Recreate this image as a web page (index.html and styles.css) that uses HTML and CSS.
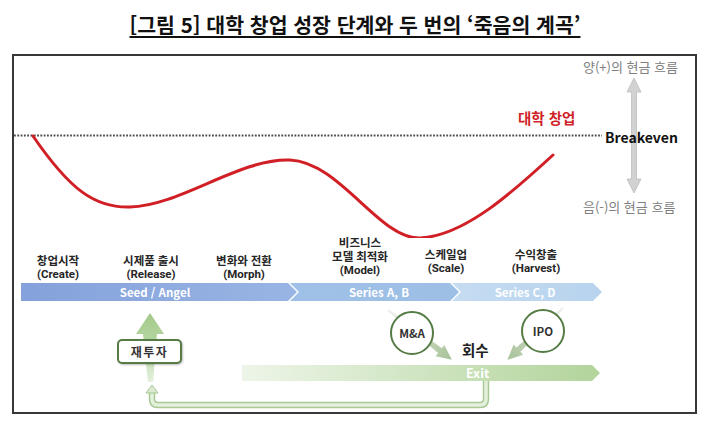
FILE: index.html
```html
<!DOCTYPE html>
<html lang="ko">
<head>
<meta charset="utf-8">
<title>대학 창업 성장 단계</title>
<link rel="stylesheet" href="styles.css">
</head>
<body>
<h1 class="title">[그림 5] 대학 창업 성장 단계와 두 번의 ‘죽음의 계곡’</h1>
<div class="frame">
  <div class="chart">
    <svg class="chart-svg" width="681" height="182" viewBox="0 0 681 182">
      <line x1="0" y1="79.5" x2="588" y2="79.5" stroke="#4a4a4a" stroke-width="2" stroke-dasharray="1.8 1.5"/>
      <polygon points="620,22 627,36 622.5,36 622.5,123 627,123 620,137 613,123 617.5,123 617.5,36 613,36" fill="#d2d2d2" stroke="#bcbcbc" stroke-width="0.8"/>
      <path d="M19,80 C56,134 81,152 116,151 C166,150 226,102 276,104 C326,106 366,184 406,182 C451,180 501,134 539,99" fill="none" stroke="#d11f26" stroke-width="3" stroke-linecap="round"/>
    </svg>
    <span class="cash cash-pos">양(+)의 현금 흐름</span>
    <span class="cash cash-neg">음(-)의 현금 흐름</span>
    <span class="uni">대학 창업</span>
    <span class="breakeven">Breakeven</span>
  </div>
  <div class="stages">
    <div class="stage s1"><span>창업시작</span><span>(Create)</span></div>
    <div class="stage s2"><span>시제품 출시</span><span>(Release)</span></div>
    <div class="stage s3"><span>변화와 전환</span><span>(Morph)</span></div>
    <div class="stage s4"><span>비즈니스</span><span>모델 최적화</span><span>(Model)</span></div>
    <div class="stage s5"><span>스케일업</span><span>(Scale)</span></div>
    <div class="stage s6"><span>수익창출</span><span>(Harvest)</span></div>
  </div>
  <div class="phases">
    <div class="phase seed">Seed / Angel</div>
    <div class="phase ab">Series A, B</div>
    <div class="phase cd">Series C, D</div>
  </div>
  <div class="exit-area">
    <svg class="exit-svg" width="681" height="111" viewBox="0 0 681 111">
      <defs>
        <linearGradient id="upg" x1="0" y1="0" x2="0" y2="1">
          <stop offset="0" stop-color="#a2ca89"/>
          <stop offset="0.5" stop-color="#b9d9a6"/>
          <stop offset="1" stop-color="#e4f0dc"/>
        </linearGradient>
        <linearGradient id="mg" gradientUnits="userSpaceOnUse" x1="0" y1="0" x2="81" y2="0">
          <stop offset="0" stop-color="#efefef"/>
          <stop offset="1" stop-color="#a7c297"/>
        </linearGradient>
        <linearGradient id="ig" gradientUnits="userSpaceOnUse" x1="0" y1="0" x2="76" y2="0">
          <stop offset="0" stop-color="#efefef"/>
          <stop offset="1" stop-color="#a7c297"/>
        </linearGradient>
      </defs>
      <path d="M472,79 L472,98 Q472,104 466,104 L144,104 Q138,104 138,98 L138,90" fill="none" stroke="#a8c996" stroke-width="6.5"/>
      <path d="M472,79 L472,98 Q472,104 466,104 L144,104 Q138,104 138,98 L138,90" fill="none" stroke="#e4f0dc" stroke-width="3.5"/>
      <polygon points="138,84 144,92 132,92" fill="#d9ead0" stroke="#a8c996" stroke-width="1"/>
      <polygon points="136,12 150,33 143,33 139,81 134,81 129,33 122,33" fill="url(#upg)"/>
      <g transform="translate(374,9) rotate(38)">
        <polygon points="0,-1 66,-3 66,-7 81,0 66,7 66,3 0,1" fill="url(#mg)"/>
      </g>
      <g transform="translate(549,7) rotate(137)">
        <polygon points="0,-1 61,-3 61,-7 76,0 61,7 61,3 0,1" fill="url(#ig)"/>
      </g>
    </svg>
    <div class="reinvest">재투자</div>
    <div class="circle mna">M&amp;A</div>
    <div class="circle ipo">IPO</div>
    <div class="recover">회수</div>
    <div class="exit-bar">Exit</div>
  </div>
</div>
</body>
</html>
```
FILE: styles.css
```css
body {
  margin: 0;
  width: 706px;
  background: #fff;
  font-family: "Noto Sans CJK KR", "Noto Sans", sans-serif;
  color: #222;
}

.title {
  margin: 0;
  height: 54px;
  padding: 9px 0 0 4px;
  box-sizing: border-box;
  font-size: 20.5px;
  line-height: 30px;
  font-weight: 700;
  text-align: center;
  color: #111;
  text-decoration: underline;
  text-decoration-thickness: 2px;
  text-underline-offset: 3px;
}

.frame {
  box-sizing: border-box;
  width: 685px;
  height: 360px;
  margin-left: 12px;
  border: 2px solid #383838;
  display: flex;
  flex-direction: column;
}

.chart {
  position: relative;
  height: 182px;
  flex: none;
}

.chart-svg {
  display: block;
}

.cash {
  position: absolute;
  left: 569px;
  font-size: 13px;
  line-height: 16px;
  color: #808080;
  white-space: nowrap;
}

.cash-pos { top: 3px; }
.cash-neg { top: 143px; }

.uni {
  position: absolute;
  left: 504px;
  top: 52px;
  font-size: 14.5px;
  line-height: 20px;
  font-weight: 700;
  color: #cf1f27;
  white-space: nowrap;
}

.breakeven {
  position: absolute;
  left: 591px;
  top: 71px;
  font-size: 14px;
  line-height: 20px;
  font-weight: 700;
  color: #111;
}

.stages {
  display: flex;
  align-items: flex-end;
  height: 45px;
  flex: none;
}

.stage {
  flex: none;
  width: 80px;
  display: flex;
  flex-direction: column;
  align-items: center;
  font-family: Roboto, "Noto Sans CJK KR", sans-serif;
  font-size: 11.5px;
  line-height: 13.6px;
  font-weight: 700;
  color: #262626;
  white-space: nowrap;
  margin-bottom: 1px;
}

.s1 { margin-left: 4px; }
.s2 { margin-left: 13px; }
.s3 { margin-left: 13px; }
.s4 { margin-left: 36px; margin-bottom: 5px; }
.s5 { margin-left: 6px; margin-bottom: 7px; }
.s6 { margin-left: 10px; margin-bottom: 7px; }

.phases {
  display: flex;
  height: 18px;
  padding-left: 7px;
  flex: none;
}

.phase {
  flex: none;
  height: 18px;
  box-sizing: border-box;
  display: flex;
  align-items: center;
  justify-content: center;
  color: #fff;
  font-size: 11.5px;
  font-weight: 700;
  white-space: nowrap;
  clip-path: polygon(0 0, calc(100% - 9px) 0, 100% 50%, calc(100% - 9px) 100%, 0 100%, 9px 50%);
}

.seed {
  width: 276px;
  padding-right: 8px;
  background: linear-gradient(to right, #84a1db, #99b5e4);
  clip-path: polygon(0 0, calc(100% - 9px) 0, 100% 50%, calc(100% - 9px) 100%, 0 100%);
}

.ab {
  width: 169px;
  margin-left: -7px;
  padding-left: 9px;
  background: linear-gradient(to right, #a0c1e7, #9dbee5);
}

.cd {
  width: 150px;
  margin-left: -7px;
  padding-right: 4px;
  background: linear-gradient(to right, #c5dcf2, #b8d3ee);
}

.exit-area {
  position: relative;
  flex: 1;
}

.exit-svg {
  display: block;
}

.reinvest {
  position: absolute;
  left: 103px;
  top: 38px;
  width: 65px;
  height: 25px;
  box-sizing: border-box;
  border: 2px solid #557c44;
  border-radius: 5px;
  background: #fff;
  display: flex;
  align-items: center;
  justify-content: center;
  font-size: 12px;
  font-weight: 700;
  letter-spacing: 1.5px;
  color: #333;
  box-shadow: 1px 1px 2px rgba(0, 0, 0, 0.25);
}

.circle {
  position: absolute;
  width: 44px;
  height: 44px;
  box-sizing: border-box;
  border: 2px solid #557c44;
  border-radius: 50%;
  background: #fff;
  display: flex;
  align-items: center;
  justify-content: center;
  font-size: 11.5px;
  font-weight: 700;
  color: #333;
}

.mna { left: 376px; top: 10px; }
.ipo { left: 507px; top: 8px; }

.recover {
  position: absolute;
  left: 448px;
  top: 38px;
  font-size: 14.5px;
  line-height: 22px;
  font-weight: 700;
  color: #222;
}

.exit-bar {
  position: absolute;
  left: 228px;
  top: 64px;
  width: 358px;
  height: 16px;
  box-sizing: border-box;
  padding-left: 224px;
  background: linear-gradient(to right, #edf5e8, #b2d49b);
  clip-path: polygon(0 0, calc(100% - 8px) 0, 100% 50%, calc(100% - 8px) 100%, 0 100%);
  color: #fff;
  font-size: 12.5px;
  font-weight: 700;
  line-height: 16px;
}
```
